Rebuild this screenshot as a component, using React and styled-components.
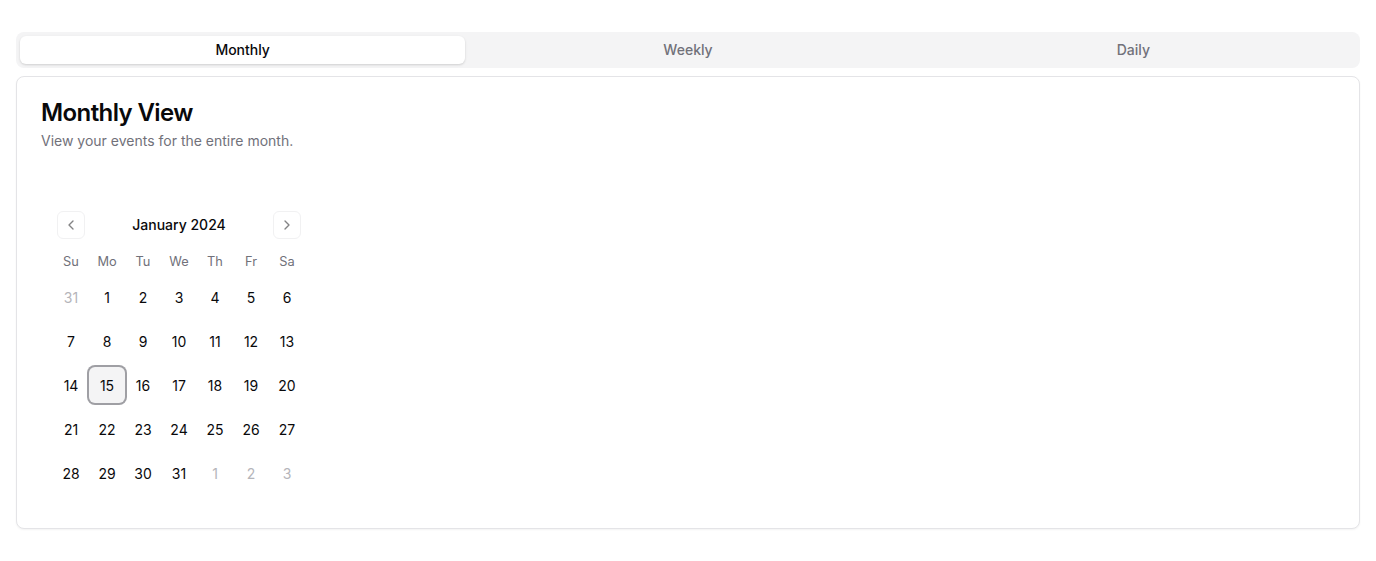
import React, { useState } from 'react';
import styled, { createGlobalStyle } from 'styled-components';
import { ChevronLeft, ChevronRight } from 'lucide-react';

const GlobalStyle = createGlobalStyle`
  * { box-sizing: border-box; }
  body {
    margin: 0;
    font-family: Inter, "Noto Sans", sans-serif;
    color: #09090b;
    background: #ffffff;
  }
`;

const Page = styled.div`
  padding: 32px 16px;
`;

const TabList = styled.div`
  display: grid;
  grid-template-columns: repeat(3, 1fr);
  height: 36px;
  padding: 4px;
  border-radius: 8px;
  background: #f4f4f5;
`;

const Tab = styled.button`
  border: none;
  border-radius: 6px;
  padding: 0 0 1px;
  font-family: inherit;
  font-size: 14px;
  line-height: 20px;
  font-weight: 500;
  cursor: pointer;
  background: ${(p) => (p.$active ? '#ffffff' : 'transparent')};
  color: ${(p) => (p.$active ? '#09090b' : '#71717a')};
  box-shadow: ${(p) => (p.$active ? '0 1px 3px rgba(0,0,0,0.1), 0 1px 2px rgba(0,0,0,0.06)' : 'none')};
`;

const Card = styled.div`
  margin-top: 8px;
  border: 1px solid #e4e4e7;
  border-radius: 8px;
  background: #ffffff;
  box-shadow: 0 1px 2px rgba(0, 0, 0, 0.05);
`;

const CardHeader = styled.div`
  padding: 24px;
  display: flex;
  flex-direction: column;
  gap: 6px;
`;

const Title = styled.h3`
  margin: 0;
  font-size: 24px;
  line-height: 24px;
  font-weight: 600;
  letter-spacing: -0.6px;
`;

const Description = styled.p`
  margin: 0;
  font-size: 14px;
  line-height: 20px;
  color: #71717a;
`;

const CardContent = styled.div`
  padding: 24px 24px 25px;
`;

const Calendar = styled.div`
  display: inline-flex;
  flex-direction: column;
  gap: 16px;
  padding: 12px;
`;

const Caption = styled.div`
  position: relative;
  display: flex;
  justify-content: center;
  align-items: center;
  padding-top: 4px;
  height: 24px;
  font-size: 14px;
  line-height: 20px;
  font-weight: 500;
`;

const NavButton = styled.button`
  position: absolute;
  top: 0;
  ${(p) => (p.$side === 'left' ? 'left: 4px;' : 'right: 4px;')}
  width: 28px;
  height: 28px;
  display: flex;
  align-items: center;
  justify-content: center;
  padding: 0;
  border: 1px solid #e4e4e7;
  border-radius: 6px;
  background: transparent;
  color: #09090b;
  opacity: 0.5;
  cursor: pointer;
`;

const Grid = styled.div`
  display: flex;
  flex-direction: column;
`;

const Row = styled.div`
  display: flex;
  margin-top: ${(p) => (p.$head ? '0' : '8px')};
`;

const HeadCell = styled.div`
  width: 36px;
  padding-top: 1px;
  text-align: center;
  font-size: 12.8px;
  line-height: 19px;
  color: #71717a;
`;

const Day = styled.button`
  width: 36px;
  height: 36px;
  padding: 0;
  border: none;
  border-radius: 6px;
  font-family: inherit;
  font-size: 14px;
  background: ${(p) => (p.$selected ? '#f4f4f5' : 'transparent')};
  color: ${(p) => (p.$outside ? '#b5b5ba' : '#09090b')};
  box-shadow: ${(p) => (p.$selected ? '0 0 0 2px #9f9fa4' : 'none')};
  cursor: pointer;
`;

const weekdays = ['Su', 'Mo', 'Tu', 'We', 'Th', 'Fr', 'Sa'];

const weeks = (() => {
  const cells = [{ d: 31, out: true }];
  for (let i = 1; i <= 31; i++) cells.push({ d: i, out: false });
  cells.push({ d: 1, out: true }, { d: 2, out: true }, { d: 3, out: true });
  const rows = [];
  for (let i = 0; i < cells.length; i += 7) rows.push(cells.slice(i, i + 7));
  return rows;
})();

export default function App() {
  const [tab, setTab] = useState('Monthly');
  return (
    <Page>
      <GlobalStyle />
      <TabList>
        {['Monthly', 'Weekly', 'Daily'].map((t) => (
          <Tab key={t} $active={tab === t} onClick={() => setTab(t)}>
            {t}
          </Tab>
        ))}
      </TabList>
      <Card>
        <CardHeader>
          <Title>Monthly View</Title>
          <Description>View your events for the entire month.</Description>
        </CardHeader>
        <CardContent>
          <Calendar>
            <Caption>
              <NavButton $side="left" aria-label="Previous month">
                <ChevronLeft size={16} strokeWidth={2} />
              </NavButton>
              January 2024
              <NavButton $side="right" aria-label="Next month">
                <ChevronRight size={16} strokeWidth={2} />
              </NavButton>
            </Caption>
            <Grid>
              <Row $head>
                {weekdays.map((w) => (
                  <HeadCell key={w}>{w}</HeadCell>
                ))}
              </Row>
              {weeks.map((week, i) => (
                <Row key={i}>
                  {week.map((c, j) => (
                    <Day key={j} $outside={c.out} $selected={!c.out && c.d === 15}>
                      {c.d}
                    </Day>
                  ))}
                </Row>
              ))}
            </Grid>
          </Calendar>
        </CardContent>
      </Card>
    </Page>
  );
}
